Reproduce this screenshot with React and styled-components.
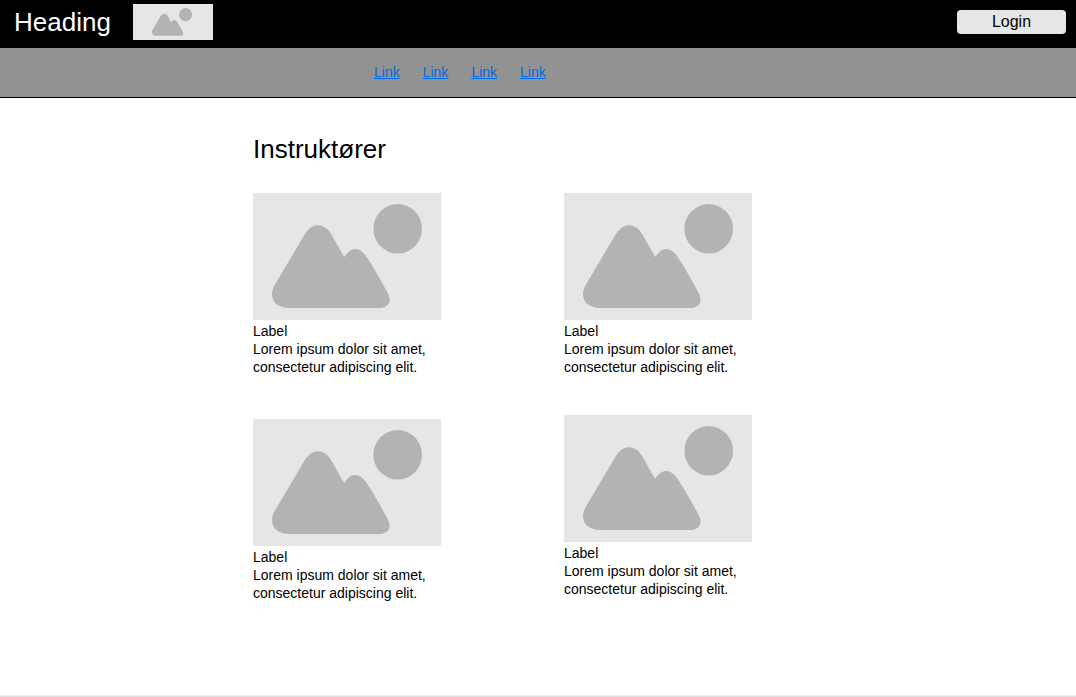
import React from "react";
import styled, { createGlobalStyle } from "styled-components";

const GlobalStyle = createGlobalStyle`
  * { box-sizing: border-box; }
  body {
    margin: 0;
    background: #fff;
    color: #000;
    font-family: "Liberation Sans", Arial, sans-serif;
    font-size: 14px;
    line-height: 18px;
  }
`;

const Page = styled.div`
  display: flex;
  flex-direction: column;
  min-height: 100vh;
`;

const Header = styled.header`
  display: flex;
  align-items: flex-start;
  height: 48px;
  padding: 4px 10px 0 14px;
  background: #000;
`;

const Brand = styled.div`
  width: 119px;
  color: #fff;
  font-size: 26px;
  line-height: 36px;
`;

const Picture = styled.svg`
  display: block;
  width: ${(p) => (p.$small ? "80px" : "188px")};
  height: ${(p) => (p.$small ? "36px" : "127px")};
  padding: ${(p) => (p.$small ? "1px 2px 1px 0" : "0")};
  background: #e6e6e6;
  fill: #b3b3b3;
`;

const LoginButton = styled.button`
  width: 109px;
  height: 24px;
  margin: 6px 0 0 auto;
  padding: 0;
  border: 0;
  border-radius: 4px;
  background: #e6e6e6;
  color: #000;
  font: 16px/24px "Liberation Sans", Arial, sans-serif;
  cursor: pointer;
`;

const Nav = styled.nav`
  display: flex;
  align-items: center;
  gap: 23px;
  height: 50px;
  padding: 0 0 2px 374px;
  border-bottom: 1px solid #000;
  background: #929292;
`;

const NavLink = styled.a`
  color: #006be6;
  text-decoration: underline;
`;

const Main = styled.main`
  flex: 1;
  padding: 33px 0 40px 253px;
`;

const Title = styled.h1`
  margin: 0 0 26px;
  font-size: 26px;
  font-weight: 400;
  line-height: 36px;
`;

const Columns = styled.div`
  display: flex;
  gap: 123px;
`;

const Column = styled.div`
  display: flex;
  flex-direction: column;
  gap: ${(p) => p.$gap}px;
  width: 188px;
`;

const Card = styled.article`
  display: flex;
  flex-direction: column;
`;

const Name = styled.h2`
  margin: 2px 0 0;
  font-size: 14px;
  font-weight: 400;
  line-height: 18px;
`;

const Bio = styled.p`
  margin: 0;
`;

const Footer = styled.footer`
  height: 2px;
  border-top: 1px solid #eee;
  background: #e0e0e0;
`;

function Placeholder({ small }) {
  return (
    <Picture $small={small} viewBox="0 0 188 127" aria-hidden="true">
      <ellipse cx="144.7" cy="35.8" rx="24.3" ry="24.8" />
      <path d="M21.7 92 L50.3 43.7 C54.5 36.5 59 32.3 64.5 32.3 C70.5 32.3 75 35.6 78.7 42 C83 49.5 87 57 91.3 64 C97.5 53.5 106.5 53.5 113 63 C120.5 74 127.5 87 134 98.7 C139.5 108 136 115 125.5 115 H36.5 C20 115 15.5 103 21.7 92 Z" />
    </Picture>
  );
}

function Instructor() {
  return (
    <Card>
      <Placeholder />
      <Name>Label</Name>
      <Bio>Lorem ipsum dolor sit amet, consectetur adipiscing elit.</Bio>
    </Card>
  );
}

export default function App() {
  return (
    <Page>
      <GlobalStyle />
      <Header>
        <Brand>Heading</Brand>
        <Placeholder small />
        <LoginButton type="button">Login</LoginButton>
      </Header>
      <Nav>
        <NavLink href="#1">Link</NavLink>
        <NavLink href="#2">Link</NavLink>
        <NavLink href="#3">Link</NavLink>
        <NavLink href="#4">Link</NavLink>
      </Nav>
      <Main>
        <Title>Instruktører</Title>
        <Columns>
          <Column $gap={43}>
            <Instructor />
            <Instructor />
          </Column>
          <Column $gap={39}>
            <Instructor />
            <Instructor />
          </Column>
        </Columns>
      </Main>
      <Footer />
    </Page>
  );
}
